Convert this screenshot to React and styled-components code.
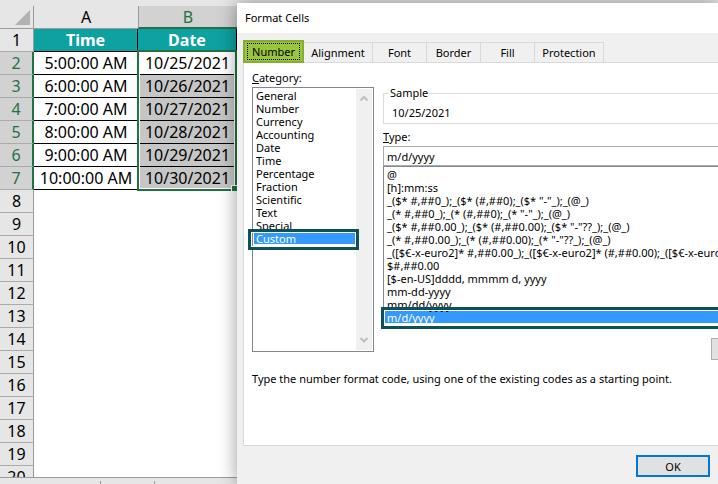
import { useState } from "react";
import styled, { createGlobalStyle } from "styled-components";

const GlobalStyle = createGlobalStyle`
	* {
		box-sizing: border-box;
	}
	body {
		margin: 0;
		overflow: hidden;
		font-family: "Noto Sans", "Open Sans", sans-serif;
		font-size: 11px;
		color: #000;
	}
`;

const Page = styled.div`
	display: flex;
	height: 100vh;
	background-color: #e6e6e6;
`;

const Workbook = styled.section`
	flex: none;
	display: flex;
	flex-direction: column;
	width: 237px;
	padding-top: 6px;
`;

const SheetArea = styled.div`
	flex: 1;
	min-height: 0;
	overflow: hidden;
	background-color: #fff;
`;

const Sheet = styled.table`
	width: 100%;
	table-layout: fixed;
	border-spacing: 0;
	font-size: 16px;
	line-height: 20px;
	text-align: center;
`;

const Row = styled.tr`
	height: 23px;
`;

const Corner = styled.th`
	width: 34px;
	padding: 0 3px 3px 0;
	background-color: #e6e6e6;
	border-right: 1px solid #9b9b9b;
	border-bottom: 1px solid #9b9b9b;
`;

const Triangle = styled.svg`
	display: block;
	margin: 3px 0 0 auto;
`;

const ColumnHead = styled.th`
	width: ${(props) => (props.$active ? "99px" : "104px")};
	padding: 0;
	font-weight: normal;
	color: ${(props) => (props.$active ? "#217346" : "#000")};
	background-color: ${(props) => (props.$active ? "#d2d2d2" : "#e6e6e6")};
	border-left: ${(props) => (props.$active ? "1px solid #9b9b9b" : "none")};
	border-bottom: ${(props) =>
		props.$active ? "2px solid #217346" : "1px solid #9b9b9b"};
`;

const RowHead = styled.th`
	padding: 0;
	font-weight: normal;
	color: ${(props) => (props.$active ? "#217346" : "#000")};
	background-color: ${(props) => (props.$active ? "#d2d2d2" : "#e6e6e6")};
	border-right: ${(props) =>
		props.$active ? "2px solid #217346" : "1px solid #9b9b9b"};
	border-bottom: 1px solid #ababab;
`;

const TitleCell = styled.td`
	padding: 0;
	color: #fff;
	font-weight: bold;
	background-color: #0ea1a1;
	border-right: 1px solid #000;
	border-bottom: 1px solid #000;
`;

const Cell = styled.td`
	position: relative;
	padding: 0;
	white-space: nowrap;
	background-color: ${(props) => (props.$shaded ? "#c6c6c6" : "#fff")};
	border-bottom: ${(props) => (props.$blank ? "none" : "1px solid #000")};
`;

const Selection = styled.div`
	position: absolute;
	z-index: 1;
	top: -2px;
	left: -1px;
	right: 0;
	height: 141px;
	border: 2px solid #217346;
	box-shadow: inset 0 0 0 1px #fff;

	&::after {
		content: "";
		position: absolute;
		right: -2px;
		bottom: -2px;
		width: 5px;
		height: 5px;
		background-color: #217346;
		border-top: 1px solid #fff;
		border-left: 1px solid #fff;
	}
`;

const SheetBar = styled.div`
	flex: none;
	display: flex;
	height: 7px;
	padding: 3px 0 0 100px;
	border-top: 1px solid #9b9b9b;
`;

const SheetTab = styled.div`
	width: 55px;
	border: solid #9b9b9b;
	border-width: 0 1px;
`;

const Dialog = styled.form`
	position: relative;
	z-index: 2;
	flex: 1;
	min-width: 0;
	display: flex;
	flex-direction: column;
	margin-top: 3px;
	background-color: #f0f0f0;
	box-shadow: 0 0 18px rgba(0, 0, 0, 0.4);
	overflow: clip;
	overflow-clip-margin: 20px;
`;

const DialogTitle = styled.h1`
	flex: none;
	height: 30px;
	margin: 0;
	padding-left: 8px;
	font-size: 11px;
	font-weight: normal;
	line-height: 30px;
	background-color: #fff;
`;

const TabList = styled.div`
	display: flex;
	align-items: flex-end;
	height: 29px;
	margin-left: 6px;
`;

const Tab = styled.button`
	width: ${(props) => props.$width}px;
	height: 20px;
	padding: 0;
	font: inherit;
	line-height: 20px;
	color: #000;
	background-color: #f0f0f0;
	border: 1px solid #d9d9d9;
	border-width: 1px 1px 0 0;
`;

const ActiveTab = styled(Tab)`
	position: relative;
	height: 23px;
	margin-bottom: -1px;
	padding: 1px 2px;
	background-color: #9bc53d;
	border: 2px solid #86ad2e;
`;

const TabFocus = styled.span`
	display: block;
	height: 17px;
	line-height: 15px;
	border: 1px dotted #000;
`;

const Panel = styled.div`
	height: 384px;
	margin-left: 6px;
	padding: 8px 0 0 8px;
	background-color: #fff;
	border: solid #d9d9d9;
	border-width: 1px 0 1px 1px;
`;

const Columns = styled.div`
	display: flex;
	gap: 9px;
	height: 281px;
`;

const CategoryColumn = styled.div`
	flex: none;
	display: flex;
	flex-direction: column;
	width: 122px;
`;

const TypeColumn = styled.div`
	flex: 1;
	min-width: 0;
	padding-top: 15px;
`;

const Label = styled.label`
	display: block;
	height: 16px;
	line-height: 14px;
`;

const CategoryFrame = styled.div`
	position: relative;
	flex: 1;
	display: flex;
	padding: 0 1px;
	border: 1px solid #828790;
`;

const ListBox = styled.select`
	flex: 1;
	display: block;
	min-width: 0;
	width: 100%;
	height: 100%;
	padding: 0;
	appearance: none;
	font: inherit;
	background-color: #fff;
	border: none;
	border-radius: 0;
	outline: none;
	overflow: hidden;
	scrollbar-width: none;

	option {
		min-height: 13px;
		height: 13px;
		padding: 0 2px;
		line-height: 13px;
		color: #000;
	}
	option:checked {
		color: #fff;
		background: #3399ff linear-gradient(#3399ff, #3399ff);
	}
`;

const ScrollBar = styled.div`
	display: flex;
	flex-direction: column;
	justify-content: space-between;
	align-items: center;
	width: 16px;
	margin: 1px 0;
	padding: 6px 0;
	background-color: #f0f0f0;
`;

const Marker = styled.div`
	position: absolute;
	top: ${(props) => props.$top}px;
	left: ${(props) => props.$left}px;
	right: ${(props) => props.$right}px;
	height: ${(props) => props.$height}px;
	border: 3px solid #0d5057;
	box-shadow: inset 0 0 0 1px #fff;
	pointer-events: none;
`;

const Sample = styled.fieldset`
	height: 38px;
	margin: 0;
	padding: 5px 8px 0;
	border: 1px solid #dcdcdc;
	border-right: none;
`;

const Legend = styled.legend`
	margin-left: -3px;
	padding: 0 1px;
	line-height: 14px;
`;

const SampleValue = styled.output`
	display: block;
	line-height: 16px;
`;

const TypeLabel = styled(Label)`
	margin-top: 6px;
`;

const TypeInput = styled.input`
	display: block;
	width: 100%;
	height: 20px;
	padding: 0 3px;
	font: inherit;
	border: 1px solid #ababab;
	border-right: none;
	border-radius: 0;
	outline: none;
`;

const TypeFrame = styled.div`
	position: relative;
	height: 160px;
	padding-left: 1px;
	border: solid #828790;
	border-width: 1px 0 1px 1px;
`;

const DeleteRow = styled.div`
	display: flex;
	justify-content: flex-end;
	margin: 12px -67px 0 0;
`;

const Button = styled.button`
	width: 74px;
	height: 22px;
	padding: 0;
	font: inherit;
	color: #000;
	background-color: #e1e1e1;
	border: ${(props) =>
		props.$primary ? "2px solid #0078d7" : "1px solid #adadad"};
`;

const Hint = styled.p`
	margin: 19px 0 0;
	line-height: 16px;
	white-space: nowrap;
`;

const Footer = styled.footer`
	display: flex;
	justify-content: flex-end;
	padding: 9px 8px 0 0;
`;

const times = ["5:00:00 AM", "6:00:00 AM", "7:00:00 AM", "8:00:00 AM", "9:00:00 AM", "10:00:00 AM"];
const dates = ["10/25/2021", "10/26/2021", "10/27/2021", "10/28/2021", "10/29/2021", "10/30/2021"];
const emptyRows = [8, 9, 10, 11, 12, 13, 14, 15, 16, 17, 18, 19, 20];

const tabs = [
	{ name: "Alignment", width: 69 },
	{ name: "Font", width: 54 },
	{ name: "Border", width: 54 },
	{ name: "Fill", width: 54 },
	{ name: "Protection", width: 69 },
];

const categories = [
	"General",
	"Number",
	"Currency",
	"Accounting",
	"Date",
	"Time",
	"Percentage",
	"Fraction",
	"Scientific",
	"Text",
	"Special",
	"Custom",
];

const formats = [
	"@",
	"[h]:mm:ss",
	'_($* #,##0_);_($* (#,##0);_($* "-"_);_(@_)',
	'_(* #,##0_);_(* (#,##0);_(* "-"_);_(@_)',
	'_($* #,##0.00_);_($* (#,##0.00);_($* "-"??_);_(@_)',
	'_(* #,##0.00_);_(* (#,##0.00);_(* "-"??_);_(@_)',
	"_([$€-x-euro2]* #,##0.00_);_([$€-x-euro2]* (#,##0.00);_([$€-x-euro2]",
	"$#,##0.00",
	"[$-en-US]dddd, mmmm d, yyyy",
	"mm-dd-yyyy",
	"mm/dd/yyyy",
	"m/d/yyyy",
];

const Arrow = ({ down }) => (
	<svg width="8" height="7" viewBox="0 0 8 7">
		<path
			d={down ? "M0.5 1 L4 4.5 L7.5 1" : "M0.5 5.5 L4 2 L7.5 5.5"}
			fill="none"
			stroke="#bfbfbf"
			strokeWidth="2"
		/>
	</svg>
);

const Spreadsheet = () => (
	<Workbook>
		<SheetArea>
			<Sheet>
				<thead>
					<Row>
						<Corner>
							<Triangle width="15" height="15">
								<path d="M15 0 V15 H0 Z" fill="#b2b2b2" />
							</Triangle>
						</Corner>
						<ColumnHead>A</ColumnHead>
						<ColumnHead $active>B</ColumnHead>
					</Row>
				</thead>
				<tbody>
					<Row>
						<RowHead>1</RowHead>
						<TitleCell>Time</TitleCell>
						<TitleCell>Date</TitleCell>
					</Row>
					{times.map((time, i) => (
						<Row key={time}>
							<RowHead $active>{i + 2}</RowHead>
							<Cell>{time}</Cell>
							<Cell $shaded={i > 0}>
								{dates[i]}
								{i === 0 && <Selection />}
							</Cell>
						</Row>
					))}
					{emptyRows.map((n) => (
						<Row key={n}>
							<RowHead>{n}</RowHead>
							<Cell $blank />
							<Cell $blank />
						</Row>
					))}
				</tbody>
			</Sheet>
		</SheetArea>
		<SheetBar>
			<SheetTab />
		</SheetBar>
	</Workbook>
);

const App = () => {
	const [category, setCategory] = useState("Custom");
	const [format, setFormat] = useState("m/d/yyyy");

	return (
		<>
			<GlobalStyle />
			<Page>
				<Spreadsheet />
				<Dialog onSubmit={(e) => e.preventDefault()}>
					<DialogTitle>Format Cells</DialogTitle>
					<TabList role="tablist">
						<ActiveTab type="button" role="tab" aria-selected="true" $width={61}>
							<TabFocus>Number</TabFocus>
						</ActiveTab>
						{tabs.map((tab) => (
							<Tab key={tab.name} type="button" role="tab" $width={tab.width}>
								{tab.name}
							</Tab>
						))}
					</TabList>
					<Panel>
						<Columns>
							<CategoryColumn>
								<Label htmlFor="category">
									<u>C</u>ategory:
								</Label>
								<CategoryFrame>
									<ListBox
										id="category"
										size={20}
										value={category}
										onChange={(e) => setCategory(e.target.value)}
									>
										{categories.map((name) => (
											<option key={name}>{name}</option>
										))}
									</ListBox>
									<ScrollBar>
										<Arrow />
										<Arrow down />
									</ScrollBar>
									<Marker $top={141} $left={-5} $right={14} $height={21} />
								</CategoryFrame>
							</CategoryColumn>
							<TypeColumn>
								<Sample>
									<Legend>Sample</Legend>
									<SampleValue>10/25/2021</SampleValue>
								</Sample>
								<TypeLabel htmlFor="type">
									<u>T</u>ype:
								</TypeLabel>
								<TypeInput
									id="type"
									value={format}
									onChange={(e) => setFormat(e.target.value)}
								/>
								<TypeFrame>
									<ListBox
										aria-label="Format codes"
										size={12}
										value={format}
										onChange={(e) => setFormat(e.target.value)}
									>
										{formats.map((code) => (
											<option key={code}>{code}</option>
										))}
									</ListBox>
									<Marker $top={140} $left={-3} $right={-4} $height={22} />
								</TypeFrame>
								<DeleteRow>
									<Button type="button" aria-label="Delete" />
								</DeleteRow>
							</TypeColumn>
						</Columns>
						<Hint>
							Type the number format code, using one of the existing codes as a
							starting point.
						</Hint>
					</Panel>
					<Footer>
						<Button type="submit" $primary>
							OK
						</Button>
					</Footer>
				</Dialog>
			</Page>
		</>
	);
};

export default App;
